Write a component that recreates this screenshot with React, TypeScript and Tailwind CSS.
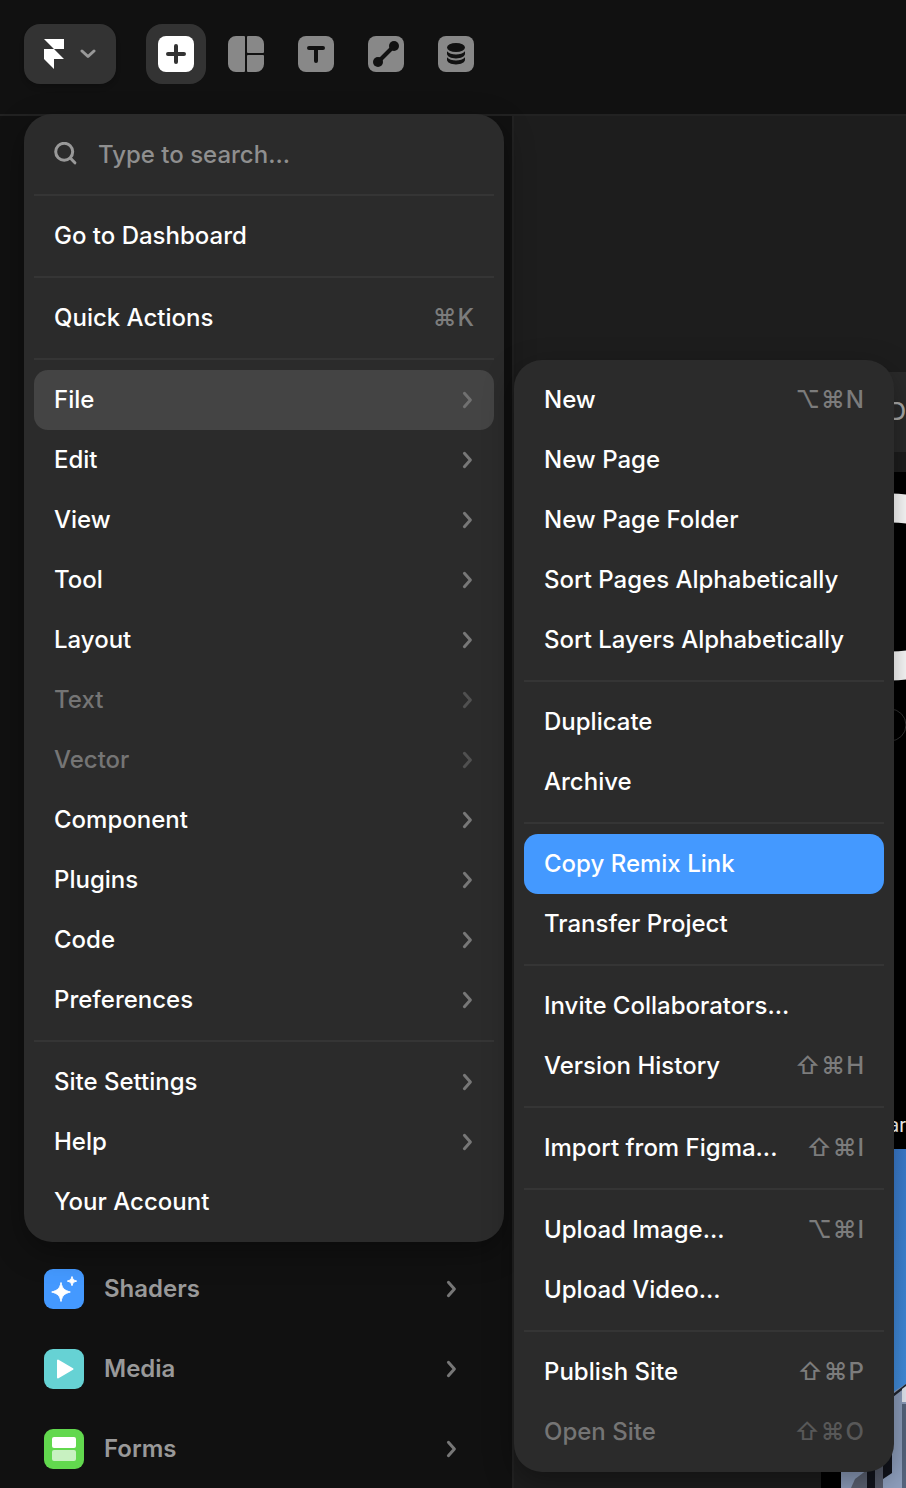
import { Fragment, useState } from "react";
import type { ReactNode } from "react";

type MenuEntry = {
  label: string;
  keys?: string[];
  submenu?: boolean;
  disabled?: boolean;
};

const MAIN_MENU: MenuEntry[][] = [
  [{ label: "Go to Dashboard" }],
  [{ label: "Quick Actions", keys: ["⌘", "K"] }],
  [
    { label: "File", submenu: true },
    { label: "Edit", submenu: true },
    { label: "View", submenu: true },
    { label: "Tool", submenu: true },
    { label: "Layout", submenu: true },
    { label: "Text", submenu: true, disabled: true },
    { label: "Vector", submenu: true, disabled: true },
    { label: "Component", submenu: true },
    { label: "Plugins", submenu: true },
    { label: "Code", submenu: true },
    { label: "Preferences", submenu: true },
  ],
  [
    { label: "Site Settings", submenu: true },
    { label: "Help", submenu: true },
    { label: "Your Account" },
  ],
];

const FILE_MENU: MenuEntry[][] = [
  [
    { label: "New", keys: ["⌥", "⌘", "N"] },
    { label: "New Page" },
    { label: "New Page Folder" },
    { label: "Sort Pages Alphabetically" },
    { label: "Sort Layers Alphabetically" },
  ],
  [{ label: "Duplicate" }, { label: "Archive" }],
  [{ label: "Copy Remix Link" }, { label: "Transfer Project" }],
  [
    { label: "Invite Collaborators..." },
    { label: "Version History", keys: ["⇧", "⌘", "H"] },
  ],
  [{ label: "Import from Figma...", keys: ["⇧", "⌘", "I"] }],
  [
    { label: "Upload Image...", keys: ["⌥", "⌘", "I"] },
    { label: "Upload Video..." },
  ],
  [
    { label: "Publish Site", keys: ["⇧", "⌘", "P"] },
    { label: "Open Site", keys: ["⇧", "⌘", "O"], disabled: true },
  ],
];

function Chevron({ className = "" }: { className?: string }) {
  return (
    <svg
      viewBox="0 0 12 18"
      className={`h-[18px] w-3 ${className}`}
      fill="none"
      stroke="currentColor"
      strokeWidth="3"
      strokeLinecap="round"
      strokeLinejoin="round"
      aria-hidden="true"
    >
      <path d="M2.400 2.300 8.400 9 2.400 15.700" />
    </svg>
  );
}

function MenuItem({
  entry,
  highlight,
  onHover,
}: {
  entry: MenuEntry;
  highlight: string;
  onHover: () => void;
}) {
  return (
    <button
      role="menuitem"
      disabled={entry.disabled}
      onMouseEnter={onHover}
      className={`flex h-[60px] w-full items-center justify-between rounded-[14px] px-5 text-left font-medium text-white disabled:text-[#757575] ${highlight}`}
    >
      <span className="whitespace-nowrap">{entry.label}</span>
      {entry.keys && (
        <span
          className={`flex gap-px ${entry.disabled ? "text-[#585858]" : "text-[#7c7c7c]"}`}
        >
          {entry.keys.map((key) => (
            <kbd key={key} className="font-[Inter,sans-serif]">
              {key}
            </kbd>
          ))}
        </span>
      )}
      {entry.submenu && (
        <Chevron className={entry.disabled ? "text-[#505050]" : "text-[#777777]"} />
      )}
    </button>
  );
}

function MenuSections({
  sections,
  initial,
  activeClass,
}: {
  sections: MenuEntry[][];
  initial: string;
  activeClass: string;
}) {
  const [active, setActive] = useState(initial);

  return (
    <>
      {sections.map((section, index) => (
        <Fragment key={index}>
          {index > 0 && <hr className="my-[10px] border-t-2 border-[#353535]" />}
          {section.map((entry) => (
            <MenuItem
              key={entry.label}
              entry={entry}
              highlight={active === entry.label ? activeClass : ""}
              onHover={() => setActive(entry.label)}
            />
          ))}
        </Fragment>
      ))}
    </>
  );
}

function AppMenu() {
  return (
    <div className="absolute top-[114px] left-6 z-10 w-[480px]">
      <div
        role="menu"
        aria-label="Main menu"
        className="rounded-[28px] bg-[#2b2b2b] px-[10px] pb-[10px] shadow-[0_10px_30px_rgba(0,0,0,0.35)]"
      >
        <label className="flex h-20 items-center gap-5 px-5">
          <svg
            viewBox="0 0 24 24"
            className="h-6 w-6 text-[#999999]"
            fill="none"
            stroke="currentColor"
            strokeWidth="3"
            strokeLinecap="round"
            aria-hidden="true"
          >
            <circle cx="10.2" cy="9.800" r="8.500" />
            <path d="m16.500 16.200 4.400 4.600" />
          </svg>
          <input
            type="text"
            aria-label="Search"
            placeholder="Type to search..."
            className="min-w-0 flex-1 bg-transparent pt-0.5 font-medium outline-none placeholder:text-[#8f8f8f]"
          />
        </label>
        <hr className="mb-[10px] border-t-2 border-[#353535]" />
        <MenuSections
          sections={MAIN_MENU}
          initial="File"
          activeClass="bg-[#444444] [&_svg]:text-[#707070]"
        />
      </div>

      <div
        role="menu"
        aria-label="File"
        className="absolute top-[246px] left-[490px] w-[380px] rounded-[28px] bg-[#2b2b2b] p-[10px] shadow-[0_10px_30px_rgba(0,0,0,0.35)]"
      >
        <MenuSections
          sections={FILE_MENU}
          initial="Copy Remix Link"
          activeClass="bg-[#4499ff]"
        />
      </div>
    </div>
  );
}

function ToolButton({
  label,
  active,
  children,
}: {
  label: string;
  active?: boolean;
  children: ReactNode;
}) {
  return (
    <button
      aria-label={label}
      className={`flex h-[60px] w-[60px] items-center justify-center rounded-[16px] ${
        active ? "bg-[#333333] text-white" : "text-[#888888]"
      }`}
    >
      <svg viewBox="0 0 36 36" className="h-9 w-9" aria-hidden="true">
        {children}
      </svg>
    </button>
  );
}

function Toolbar() {
  return (
    <header className="flex h-[116px] items-start border-b-2 border-[#222222] px-6 pt-6">
      <button
        aria-label="Open main menu"
        className="mr-[30px] flex h-[60px] w-[92px] items-center gap-4 rounded-[16px] bg-[#333333] pl-5 shadow-md"
      >
        <svg viewBox="0 0 20 30" className="h-[30px] w-5 fill-white" aria-hidden="true">
          <path d="M0 0h20v10H10zM0 10h10l10 10H10v10L0 20z" />
        </svg>
        <svg
          viewBox="0 0 16 10"
          className="h-[10px] w-4 text-[#999999]"
          fill="none"
          stroke="currentColor"
          strokeWidth="3"
          strokeLinecap="round"
          strokeLinejoin="round"
          aria-hidden="true"
        >
          <path d="m2 2 6 5.500 6-5.500" />
        </svg>
      </button>

      <div className="flex gap-[10px]">
        <ToolButton label="Insert" active>
          <rect width="36" height="36" rx="8" fill="currentColor" />
          <path d="M18 10v16M10 18h16" stroke="#333333" strokeWidth="4" strokeLinecap="round" />
        </ToolButton>
        <ToolButton label="Layout">
          <path
            fill="currentColor"
            d="M8 0h8a1 1 0 0 1 1 1v34a1 1 0 0 1-1 1H8a8 8 0 0 1-8-8V8a8 8 0 0 1 8-8zM20 0h8a8 8 0 0 1 8 8v8a1 1 0 0 1-1 1H20a1 1 0 0 1-1-1V1a1 1 0 0 1 1-1zM20 19h15a1 1 0 0 1 1 1v8a8 8 0 0 1-8 8h-8a1 1 0 0 1-1-1V20a1 1 0 0 1 1-1z"
          />
        </ToolButton>
        <ToolButton label="Text">
          <rect width="36" height="36" rx="8" fill="currentColor" />
          <path d="M11 12h14M18 12v13" stroke="#111111" strokeWidth="4" strokeLinecap="round" />
        </ToolButton>
        <ToolButton label="Vector">
          <rect width="36" height="36" rx="8" fill="currentColor" />
          <path d="M10 26 26 10" stroke="#111111" strokeWidth="4" />
          <circle cx="10" cy="26" r="5" fill="#111111" />
          <circle cx="26" cy="10" r="5" fill="#111111" />
        </ToolButton>
        <ToolButton label="CMS">
          <rect width="36" height="36" rx="8" fill="currentColor" />
          <g fill="#111111">
            <ellipse cx="18" cy="11.500" rx="9" ry="4.500" />
            <path d="M9 15.200c2 2.200 5.300 3.300 9 3.300s7-1.100 9-3.300v2.600c0 2.600-4 4.700-9 4.700s-9-2.100-9-4.700z" />
            <path d="M9 21.200c2 2.200 5.300 3.300 9 3.300s7-1.100 9-3.300v2.600c0 2.600-4 4.700-9 4.700s-9-2.100-9-4.700z" />
          </g>
        </ToolButton>
      </div>
    </header>
  );
}

const INSERT_ROWS = [
  {
    label: "Shaders",
    icon: (
      <>
        <rect width="40" height="40" rx="9" fill="#4499ff" />
        <path
          fill="#ffffff"
          stroke="#ffffff"
          strokeLinejoin="round"
          d="M17 13.500c1.300 6 3 7.700 9.300 9.500-6.300 1.800-8 3.500-9.300 9.500-1.300-6-3-7.700-9.300-9.500 6.300-1.800 8-3.500 9.300-9.500zM28 7.500c.8 3 1.700 3.800 4.700 4.600-3 .8-3.900 1.600-4.700 4.600-.8-3-1.700-3.800-4.700-4.600 3-.8 3.900-1.600 4.700-4.600z"
        />
      </>
    ),
  },
  {
    label: "Media",
    icon: (
      <>
        <rect width="40" height="40" rx="9" fill="#66d2d4" />
        <path
          d="M14 11.500v17L28.500 20z"
          fill="#ffffff"
          stroke="#ffffff"
          strokeWidth="2"
          strokeLinejoin="round"
        />
      </>
    ),
  },
  {
    label: "Forms",
    icon: (
      <>
        <rect width="40" height="40" rx="9" fill="#62d84e" />
        <rect x="8" y="8" width="24" height="11" rx="2" fill="#ffffff" />
        <rect x="8" y="21" width="24" height="11" rx="2" fill="#ffffff" fillOpacity="0.650" />
      </>
    ),
  },
];

function InsertPanel() {
  return (
    <aside className="flex w-[514px] shrink-0 flex-col justify-end border-r-2 border-[#222222]">
      {INSERT_ROWS.map((row) => (
        <button
          key={row.label}
          className="flex h-20 items-center gap-5 pt-0.5 pr-[54px] pl-11 text-left font-semibold text-[#999999]"
        >
          <svg viewBox="0 0 40 40" className="h-10 w-10" aria-hidden="true">
            {row.icon}
          </svg>
          <span className="flex-1">{row.label}</span>
          <Chevron className="text-[#777777]" />
        </button>
      ))}
    </aside>
  );
}

function Canvas() {
  return (
    <main className="flex min-w-0 flex-1 flex-col overflow-hidden bg-[#1d1d1d] pt-[256px] pl-[307px]">
      <div className="flex h-20 items-center justify-end bg-[#2a2a2a] font-medium text-[#aaaaaa]">
        D
      </div>
      <div className="mt-5 flex flex-1 flex-col items-end overflow-hidden bg-black text-white">
        {/* hero lettering, cut off by the window edge */}
        <svg viewBox="0 0 85 280" className="h-[280px] w-[85px]" aria-hidden="true">
          <ellipse cx="70" cy="115" rx="92" ry="79" fill="none" stroke="#ffffff" strokeWidth="29" />
          <circle cx="69" cy="253" r="16" fill="none" stroke="#333333" />
        </svg>
        <p className="mt-auto pb-3 font-[Roboto,sans-serif] text-xl leading-6">ar</p>
        <svg
          viewBox="0 0 65 339"
          className="h-[339px] w-[65px]"
          role="img"
          aria-label="Apartment building under a blue sky"
        >
          <defs>
            <linearGradient id="sky" x1="0" y1="0" x2="0" y2="1">
              <stop offset="0" stopColor="#3b7dd0" />
              <stop offset="1" stopColor="#4596e6" />
            </linearGradient>
          </defs>
          <rect width="65" height="339" fill="url(#sky)" />
          <path d="M0 290 52 243l13-8v104H0z" fill="#8e9fbd" />
          <path d="M52 245 65 235v3l-13 10z" fill="#20242e" />
          <path d="M61 240l4-3v16h-4z" fill="#e4e9f2" />
          <path d="M61 255h4v84h-4z" fill="#56657e" />
          <path d="M14 330 26 321v18H10z" fill="#5c6373" />
          <path d="M26 318h8v21h-8zM42 296h9v28l-9 6z" fill="#12141c" />
          <path d="M34 316h8v23h-8z" fill="#555a69" />
        </svg>
      </div>
    </main>
  );
}

export default function App() {
  return (
    <div className="relative flex min-h-screen flex-col overflow-hidden bg-[#111111] font-[Inter,sans-serif] text-2xl">
      <Toolbar />
      <div className="flex min-h-[1372px] flex-1">
        <InsertPanel />
        <Canvas />
      </div>
      <AppMenu />
    </div>
  );
}
